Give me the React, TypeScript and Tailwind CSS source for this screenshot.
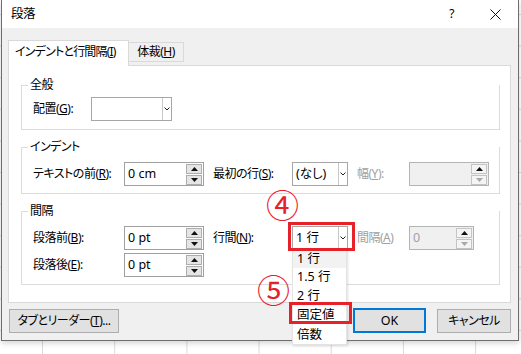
import type { ReactNode } from 'react';

function Chevron() {
  return (
    <svg width="6" height="4" viewBox="0 0 6 4">
      <path d="M0.5 0.5 L3 3 L5.5 0.5" fill="none" stroke="#222" strokeWidth="1" />
    </svg>
  );
}

function Arrow({ up, color }: { up?: boolean; color: string }) {
  return (
    <svg width="7" height="4" viewBox="0 0 7 4">
      <path d={up ? 'M0 4 L3.5 0 L7 4Z' : 'M0 0 L3.5 4 L7 0Z'} fill={color} />
    </svg>
  );
}

function Spin({ value, width, disabled }: { value: string; width: string; disabled?: boolean }) {
  return (
    <div
      className={`flex h-[24px] items-center border ${width} ${
        disabled ? 'border-[#b4b4b4] bg-[#f0f0f0] text-[#a0a0a0]' : 'border-[#a0a0a0] bg-white text-black'
      }`}
    >
      <span className="flex-1 pl-[3px] text-[12.5px] tracking-normal">{value}</span>
      <div className="mr-[1px] flex flex-col gap-[1px]">
        <div
          className={`flex h-[10px] w-[16px] items-center justify-center border ${
            disabled ? 'border-[#c4c4c4] bg-[#f4f4f4]' : 'border-[#adadad] bg-[#e5e5e5]'
          }`}
        >
          <Arrow up color="#111" />
        </div>
        <div
          className={`flex h-[10px] w-[16px] items-center justify-center border ${
            disabled ? 'border-[#c4c4c4] bg-[#f4f4f4]' : 'border-[#adadad] bg-[#e5e5e5]'
          }`}
        >
          <Arrow color={disabled ? '#a8a8a8' : '#111'} />
        </div>
      </div>
    </div>
  );
}

function Combo({ value, width }: { value: string; width: string }) {
  return (
    <div className={`flex h-[24px] items-center border border-[#a6a6a6] bg-white ${width}`}>
      <span className="flex-1 pl-[3px] text-[12.5px] tracking-normal">{value}</span>
      <div className="flex h-full w-[9px] items-center justify-center border-l border-[#c8c8c8]">
        <Chevron />
      </div>
    </div>
  );
}

function Group({ label, className, children }: { label: string; className: string; children: ReactNode }) {
  return (
    <div className="border-x border-b border-[#dcdcdc]">
      <div className="relative h-0">
        <div className="flex -translate-y-1/2 items-center">
          <span className="h-px w-[6px] bg-[#dcdcdc]" />
          <span className="bg-white px-[2px] leading-[16px]">{label}</span>
        </div>
      </div>
      <div className={className}>{children}</div>
    </div>
  );
}

export default function App() {
  return (
    <div className="relative h-[354px] w-[521px] overflow-hidden whitespace-nowrap bg-white bg-[linear-gradient(to_right,#dadada_1px,transparent_1px),linear-gradient(to_bottom,#dadada_1px,transparent_1px)] bg-[size:72.2px_31.6px] bg-[position:42px_14px] font-['Noto_Sans','Noto_Sans_CJK_JP',sans-serif] text-[12px] leading-[16px] tracking-[-0.5px] text-black [font-feature-settings:'palt']">
      {/* dialog window */}
      <div className="absolute left-[1px] top-0 flex h-[341px] w-[518px] flex-col border-x border-b border-[#6e6e6e] shadow-[0_2px_6px_rgba(0,0,0,0.18)]">
        <div className="flex h-[28px] items-center bg-white pl-[9px]">
          <span className="text-[12.5px]">段落</span>
          <span className="ml-auto mr-[36px]">?</span>
          <svg className="mr-[17px]" width="11" height="11" viewBox="0 0 11 11">
            <path d="M0.5 0.5 L10.5 10.5 M10.5 0.5 L0.5 10.5" stroke="#111" strokeWidth="1" />
          </svg>
        </div>

        <div className="flex flex-1 flex-col bg-[#f0f0f0] pl-[6px] pr-[7px] pt-[12px]">
          <div className="flex items-start">
            <div className="relative z-10 -mb-[1px] h-[26px] w-[121px] border border-b-0 border-[#d9d9d9] bg-white pl-[6px] pt-[3px] tracking-[-0.8px]">
              インデントと行間隔(<u>I</u>)
            </div>
            <div className="-ml-[1px] mt-[2px] flex h-[20px] w-[56px] items-center justify-center border border-[#d9d9d9] bg-[#f0f0f0]">
              体裁(<u>H</u>)
            </div>
          </div>

          <div className="flex h-[238px] flex-col gap-[17px] border border-[#d9d9d9] bg-white pl-[12px] pr-[10px] pt-[19px]">
            <Group label="全般" className="pb-[8px] pl-[11px] pt-[12px]">
              <div className="flex h-[24px] items-center">
                <span className="w-[58px]">
                  配置(<u>G</u>):
                </span>
                <Combo value="" width="w-[81px]" />
              </div>
            </Group>

            <Group label="インデント" className="pb-[7px] pl-[11px] pt-[15px]">
              <div className="flex h-[24px] items-center">
                <span className="w-[91px]">
                  テキストの前(<u>R</u>):
                </span>
                <Spin value="0 cm" width="w-[80px]" />
                <span className="ml-[9px] w-[79px]">
                  最初の行(<u>S</u>):
                </span>
                <Combo value="(なし)" width="w-[56px]" />
                <span className="ml-[9px] w-[52px] text-[#a0a0a0]">
                  幅(<u>Y</u>):
                </span>
                <Spin value="" width="w-[80px]" disabled />
              </div>
            </Group>

            <Group label="間隔" className="flex flex-col gap-[3px] pb-[7px] pl-[11px] pt-[15px]">
              <div className="flex h-[24px] items-center">
                <span className="w-[91px]">
                  段落前(<u>B</u>):
                </span>
                <Spin value="0 pt" width="w-[80px]" />
                <span className="ml-[9px] w-[79px]">
                  行間(<u>N</u>):
                </span>
                <Combo value="1 行" width="w-[56px]" />
                <span className="ml-[9px] w-[52px] text-[#a0a0a0]">
                  間隔(<u>A</u>)
                </span>
                <Spin value="0" width="w-[65px]" disabled />
              </div>
              <div className="flex h-[24px] items-center">
                <span className="w-[91px]">
                  段落後(<u>E</u>):
                </span>
                <Spin value="0 pt" width="w-[80px]" />
              </div>
            </Group>
          </div>

          <div className="mt-[5px] flex items-center">
            <button className="ml-[1px] flex h-[24px] w-[110px] items-center justify-center border border-[#adadad] bg-[#e1e1e1]">
              タブとリーダー(<u>T</u>)...
            </button>
            <button className="ml-auto flex h-[25px] w-[73px] items-center justify-center border-2 border-[#0078d7] bg-[#e1e1e1] text-[12.5px] tracking-normal">
              OK
            </button>
            <button className="ml-[11px] flex h-[24px] w-[74px] items-center justify-center border border-[#adadad] bg-[#e1e1e1]">
              キャンセル
            </button>
          </div>
        </div>
      </div>

      {/* open dropdown list */}
      <div className="absolute left-[292px] top-[249px] flex w-[55px] flex-col border border-[#e4e4e4] bg-white text-[12.5px] tracking-normal shadow-[1px_1px_2px_rgba(0,0,0,0.12)]">
        <div className="flex h-[18px] items-center bg-[#f2f2f2] pl-[4px]">1 行</div>
        <div className="flex h-[18px] items-center pl-[4px]">1.5 行</div>
        <div className="flex h-[19px] items-center pl-[4px]">2 行</div>
        <div className="flex h-[20px] items-center pl-[4px]">固定値</div>
        <div className="flex h-[19px] items-center pl-[4px]">倍数</div>
      </div>

      {/* annotations */}
      <div className="absolute left-[288px] top-[222px] h-[29px] w-[67px] border-[3px] border-[#e62129]" />
      <div className="absolute left-[289px] top-[302px] h-[22px] w-[63px] border-[3px] border-[#e62129]" />
      <span className="absolute left-[266px] top-[189px] text-[33px] leading-[33px] tracking-normal text-[#e62129] [font-feature-settings:normal]">④</span>
      <span className="absolute left-[257px] top-[274px] text-[33px] leading-[33px] tracking-normal text-[#e62129] [font-feature-settings:normal]">⑤</span>
    </div>
  );
}
